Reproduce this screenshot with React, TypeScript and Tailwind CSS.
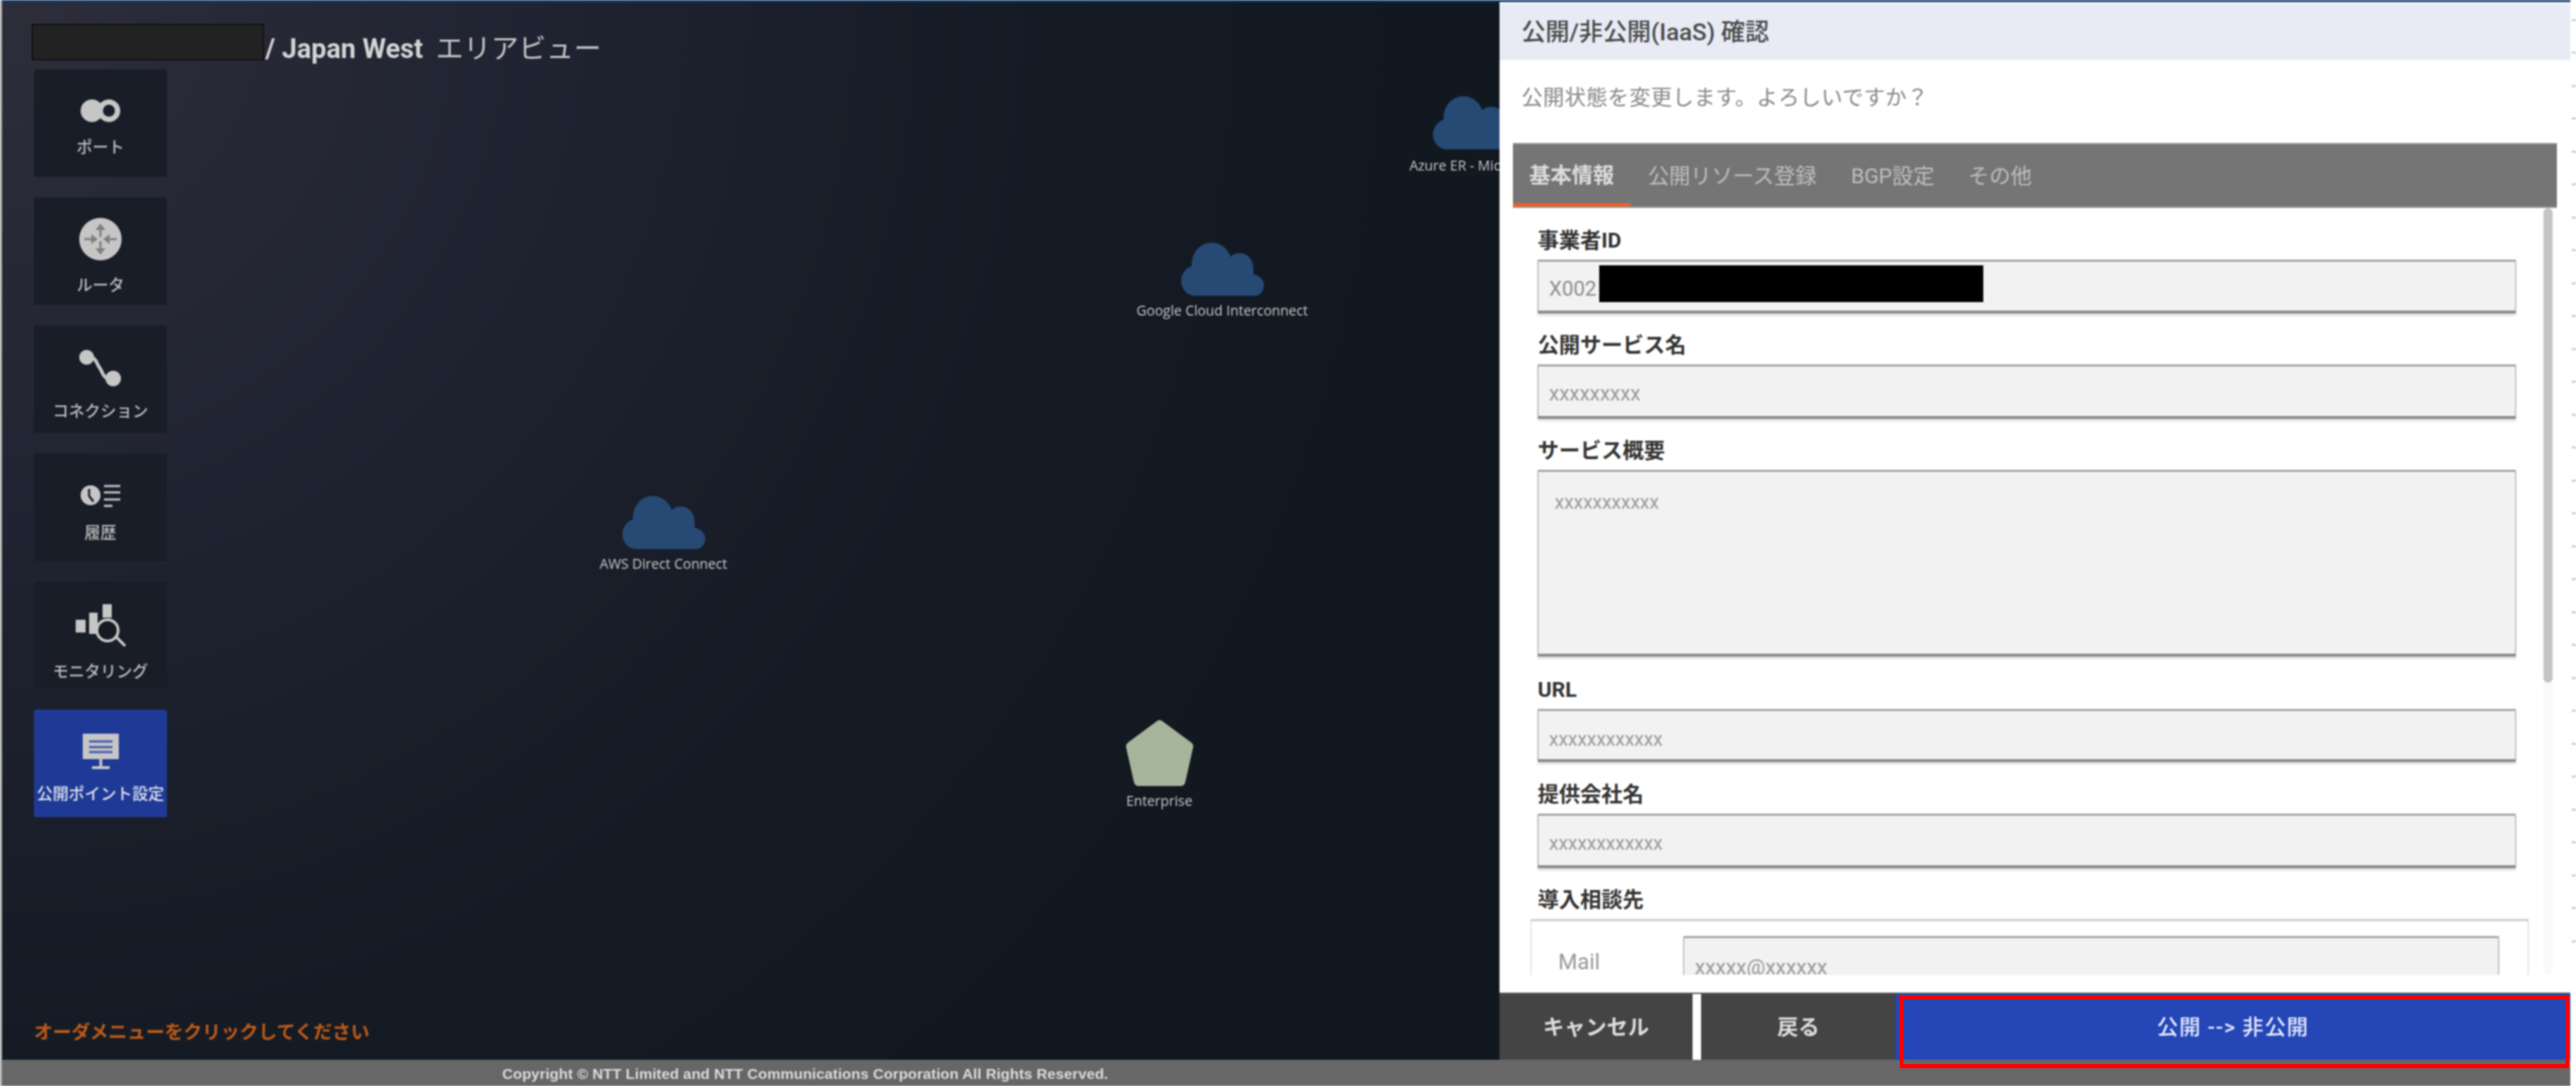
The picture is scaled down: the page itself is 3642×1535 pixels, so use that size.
import React from "react";

const Cloud = () => (
  <svg width="117" height="75" viewBox="0 0 117 75" className="shrink-0">
    <path
      d="M20 75C8 75 0 65 0 54C0 45 6 36 15 33C14 14 27 0 43 0C56 0 65 8 70 20C73 16 78 15 83 15C94 15 102 24 102 37L102 45C111 46 117 53 117 60C117 69 111 75 104 75Z"
      fill="#264a74"
    />
  </svg>
);

const PortIcon = () => (
  <svg width="56" height="33" viewBox="0 0 56 33">
    <circle cx="16" cy="16.5" r="16" fill="#c6c6c6" />
    <circle cx="40" cy="16.5" r="16" fill="#c6c6c6" />
    <rect x="14" y="8" width="26" height="17" fill="#c6c6c6" />
    <circle cx="40" cy="16.5" r="8.5" fill="#1a1e29" />
  </svg>
);

const RouterIcon = () => (
  <svg width="60" height="60" viewBox="0 0 60 60">
    <circle cx="30" cy="30" r="30" fill="#c6c6c6" />
    <g stroke="#7f7f7f" strokeWidth="3" fill="#7f7f7f">
      <path d="M30 14V27" />
      <path d="M30 46V33" />
      <path d="M7 30H19" />
      <path d="M53 30H41" />
    </g>
    <g fill="#7f7f7f">
      <path d="M30 8L37 17H23Z" />
      <path d="M30 52L37 43H23Z" />
      <path d="M26 30L17 23V37Z" />
      <path d="M34 30L43 23V37Z" />
    </g>
  </svg>
);

const ConnectionIcon = () => (
  <svg width="60" height="52" viewBox="0 0 60 52">
    <circle cx="10.5" cy="11" r="10.5" fill="#c6c6c6" />
    <circle cx="48" cy="41" r="11" fill="#c6c6c6" />
    <path d="M10 11C24 8 24 20 29 26C34 33 34 44 48 41" stroke="#c6c6c6" strokeWidth="5" fill="none" />
  </svg>
);

const HistoryIcon = () => (
  <svg width="56" height="35" viewBox="0 0 56 35">
    <circle cx="14" cy="17" r="14" fill="#c6c6c6" />
    <path d="M12 8V18L18 26" stroke="#1a1e29" strokeWidth="3" fill="none" />
    <g stroke="#c6c6c6" strokeWidth="3">
      <path d="M33 4H56" />
      <path d="M33 13H56" />
      <path d="M33 23H56" />
      <path d="M33 32H45" />
    </g>
  </svg>
);

const MonitorIcon = () => (
  <svg width="71" height="61" viewBox="0 0 71 61">
    <rect x="0" y="23" width="14" height="18" fill="#c6c6c6" />
    <rect x="19" y="13" width="12" height="30" fill="#c6c6c6" />
    <rect x="38" y="1" width="13" height="19" fill="#c6c6c6" />
    <circle cx="45" cy="38" r="15" fill="#161a23" stroke="#c6c6c6" strokeWidth="4" />
    <path d="M57 47L70 60" stroke="#c6c6c6" strokeWidth="4" />
  </svg>
);

const PublishIcon = () => (
  <svg width="51" height="50" viewBox="0 0 51 50">
    <rect x="0" y="0" width="51" height="36" rx="1" fill="#c6c6c6" />
    <g stroke="#3f57aa" strokeWidth="3">
      <path d="M9 11H42" />
      <path d="M9 19H42" />
      <path d="M9 26H42" />
    </g>
    <path d="M25.5 36V48" stroke="#c6c6c6" strokeWidth="4" />
    <path d="M13 48H38" stroke="#c6c6c6" strokeWidth="4" />
  </svg>
);

const NavCard = ({
  icon,
  label,
  pad,
  active,
}: {
  icon: React.ReactNode;
  label: string;
  pad: string;
  active?: boolean;
}) => (
  <div
    className={`flex h-[152px] w-[188px] flex-col items-center gap-[20px] rounded-[3px] ${pad} ${
      active ? "bg-[#1f3a96]" : "bg-[#191d27]"
    }`}
  >
    {icon}
    <span
      className={`whitespace-nowrap text-[22.5px] leading-[30px] font-medium ${
        active ? "text-[#dfe3f0]" : "text-[#bcbcbc]"
      }`}
    >
      {label}
    </span>
  </div>
);

const fieldBox =
  "border-x border-x-[#9c9c9c] border-t-[3px] border-t-[#a6a6a6] border-b-[4px] border-b-[#8a8a8a] bg-[#f2f2f2] shadow-[0_3px_3px_rgba(0,0,0,0.15)]";

const FieldLabel = ({ children, top }: { children: React.ReactNode; top: string }) => (
  <div className={`mb-[7px] h-[40px] text-[30px] leading-[40px] font-bold text-[#333333] ${top}`}>{children}</div>
);

const Field = ({ value, size, extra }: { value: string; size: string; extra: string }) => (
  <div className={`flex items-center pl-[15px] text-[27px] text-[#9a9a9a] ${fieldBox} ${size} ${extra}`}>{value}</div>
);

const Node = ({
  pos,
  icon,
  label,
  gap,
}: {
  pos: string;
  icon: React.ReactNode;
  label: string;
  gap: string;
}) => (
  <div className={`absolute flex w-[240px] flex-col items-center ${pos} ${gap}`}>
    {icon}
    <span className="whitespace-nowrap font-['Open_Sans',sans-serif] text-[19.5px] leading-[24px] text-[#c8c8c8]">{label}</span>
  </div>
);

export default function App() {
  return (
    <div className="relative h-[1535px] w-[3642px] overflow-hidden bg-white">
      <div className="flex h-full w-full font-['Roboto','Noto_Sans_CJK_JP',sans-serif] blur-[0.8px]">
        <div className="flex h-full w-[3634px] flex-col border-l-[3px] border-l-[#a8a8a8]">
          <div className="h-[3px] shrink-0 bg-[#123c6c]" />
          <div className="flex min-h-0 flex-1">
            {/* canvas */}
            <div className="relative flex w-[2117px] shrink-0 flex-col overflow-hidden bg-[radial-gradient(circle_at_0_0,#2e2e3b_0,#212432_700px,#1b202c_1037px,#151b25_1500px,#11181f_2100px)] pl-[45px] pt-[31px]">
              <div className="flex h-[51px] items-center text-[38px] text-[#d4d4d4]">
                <div className="-ml-[3px] h-[51px] w-[328px] shrink-0 border border-black bg-[#222222]" />
                <span className="ml-[2px] mt-[20px] whitespace-nowrap font-bold">/ Japan West</span>
                <span className="ml-[18px] mt-[20px] whitespace-nowrap text-[39px] font-normal text-[#c4c4c4]">エリアビュー</span>
              </div>
              <div className="mt-[13px] flex flex-col gap-[29px]">
                <NavCard icon={<PortIcon />} label="ポート" pad="pt-[42px]" />
                <NavCard icon={<RouterIcon />} label="ルータ" pad="pt-[29px]" />
                <NavCard icon={<ConnectionIcon />} label="コネクション" pad="pt-[34px]" />
                <NavCard icon={<HistoryIcon />} label="履歴" pad="pt-[42px]" />
                <NavCard icon={<MonitorIcon />} label="モニタリング" pad="pt-[31px]" />
                <NavCard icon={<PublishIcon />} label="公開ポイント設定" pad="pt-[34px]" active />
              </div>
              <div className="mt-auto mb-[26px] text-[26.5px] leading-[26px] font-bold text-[#bf5a16]">
                オーダメニューをクリックしてください
              </div>
              <Node pos="left-[815px] top-[698px]" gap="gap-[9px]" icon={<Cloud />} label="AWS Direct Connect" />
              <Node pos="left-[1605px] top-[340px]" gap="gap-[9px]" icon={<Cloud />} label="Google Cloud Interconnect" />
              <Node pos="left-[1961px] top-[133px]" gap="gap-[11px]" icon={<Cloud />} label="Azure ER - Microsoft" />
              <Node
                pos="left-[1516px] top-[1014px]"
                gap="gap-[8px]"
                icon={
                  <svg width="97" height="95" viewBox="0 0 97 95">
                    <polygon
                      points="48.5,8 89,38 78,87 19,87 8,38"
                      fill="#a6b49c"
                      stroke="#a6b49c"
                      strokeWidth="14"
                      strokeLinejoin="round"
                    />
                  </svg>
                }
                label="Enterprise"
              />
            </div>
            {/* panel */}
            <div className="flex w-[1514px] shrink-0 flex-col bg-white pt-[2px]">
              <div className="flex h-[80px] shrink-0 items-center bg-[#e8ebf4] pl-[31px] text-[34px] font-medium text-[#4a4a4a]">
                公開/非公開(IaaS) 確認
              </div>
              <div className="h-[117px] shrink-0 pl-[31px] pt-[34px] text-[30px] leading-[38px] tracking-[0.5px] text-[#8a8a8a]">
                公開状態を変更します。よろしいですか？
              </div>
              <div className="mx-[19px] flex h-[92px] shrink-0 border-y-2 border-y-[#9a9a9a] bg-[#757575] text-[30px]">
                <div className="flex w-[166px] items-center justify-center border-b-[5px] border-b-[#e8622c] pt-[3px] font-bold text-[#dcdcdc]">
                  基本情報
                </div>
                <div className="flex w-[288px] items-center justify-center text-[#bdbdbd]">公開リソース登録</div>
                <div className="flex w-[166px] items-center justify-center text-[#bdbdbd]">BGP設定</div>
                <div className="flex w-[137px] items-center justify-center text-[#bdbdbd]">その他</div>
              </div>
              <div className="flex min-h-0 flex-1 pr-[25px]">
                <div className="min-w-0 flex-1 overflow-hidden pl-[54px] pr-[39px] pt-px">
                  <FieldLabel top="mt-[25px]">事業者ID</FieldLabel>
                  <div className={`flex h-[76px] pl-[15px] text-[27px] text-[#8f8f8f] ${fieldBox}`}>
                    <span className="w-[71px] shrink-0 self-center pt-[8px] text-[29px]">X002</span>
                    <div className="mt-[5px] h-[52px] w-[543px] bg-black" />
                  </div>
                  <FieldLabel top="mt-[25px]">公開サービス名</FieldLabel>
                  <Field value="xxxxxxxxx" size="h-[77px]" extra="pt-[8px] text-[29px]" />
                  <FieldLabel top="mt-[25px]">サービス概要</FieldLabel>
                  <div className={`h-[264px] pl-[23px] pt-[26px] text-[27px] leading-[34px] text-[#9a9a9a] ${fieldBox}`}>
                    xxxxxxxxxxx
                  </div>
                  <FieldLabel top="mt-[27px]">URL</FieldLabel>
                  <Field value="xxxxxxxxxxxx" size="h-[75px]" extra="pt-[12px]" />
                  <FieldLabel top="mt-[26px]">提供会社名</FieldLabel>
                  <Field value="xxxxxxxxxxxx" size="h-[77px]" extra="pt-[8px]" />
                  <FieldLabel top="mt-[25px]">導入相談先</FieldLabel>
                  <div className="-ml-[10px] -mr-[18px] flex h-[120px] border-x border-x-[#cccccc] border-t-[3px] border-t-[#cccccc] pt-[21px]">
                    <div className="w-[215px] shrink-0 pl-[38px] pt-[17px] text-[31px] leading-[40px] text-[#9a9a9a]">Mail</div>
                    <div className={`h-[90px] w-[1153px] pl-[15px] pt-[24px] text-[29.5px] leading-[34px] text-[#9a9a9a] ${fieldBox}`}>
                      xxxxx@xxxxxx
                    </div>
                  </div>
                </div>
                <div className="h-full w-[13px] shrink-0 rounded-full bg-[#fafafa]">
                  <div className="h-[671px] w-full rounded-full bg-[#c4c4c4]" />
                </div>
              </div>
              <div className="mt-[25px] flex h-[95px] shrink-0 border-t-2 border-t-[#5a5a5a] text-[30px] text-[#dedede]">
                <div className="flex w-[273px] items-center justify-center bg-[#444444] font-bold">キャンセル</div>
                <div className="ml-[12px] flex w-[275px] items-center justify-center bg-[#444444] font-bold">戻る</div>
                <div className="flex flex-1 items-center justify-center bg-[#2446b6] font-medium tracking-[1.4px] text-[#e8ecff]">
                  公開 --&gt; 非公開
                </div>
              </div>
            </div>
          </div>
          <div className="flex h-[37px] shrink-0 items-center bg-[repeating-linear-gradient(to_bottom,#6c6c6c_0,#6c6c6c_2px,#626262_2px,#626262_4px)] pl-[707px] pt-[2px] font-['Liberation_Sans',sans-serif] text-[21px] font-bold tracking-[0.1px] text-[#dcdcdc]">
            Copyright © NTT Limited and NTT Communications Corporation All Rights Reserved.
          </div>
        </div>
        <div className="flex-1 pl-[2px] pt-[27px]">
          <div className="h-[1346px] w-full bg-[repeating-linear-gradient(to_bottom,#cfcfcf_0,#cfcfcf_3px,transparent_3px,transparent_46.5px)]" />
        </div>
      </div>
      <div className="absolute left-[2686px] top-[1407px] h-[103px] w-[946px] border-x-[5px] border-y-[6px] border-[#ff0000]" />
    </div>
  );
}
